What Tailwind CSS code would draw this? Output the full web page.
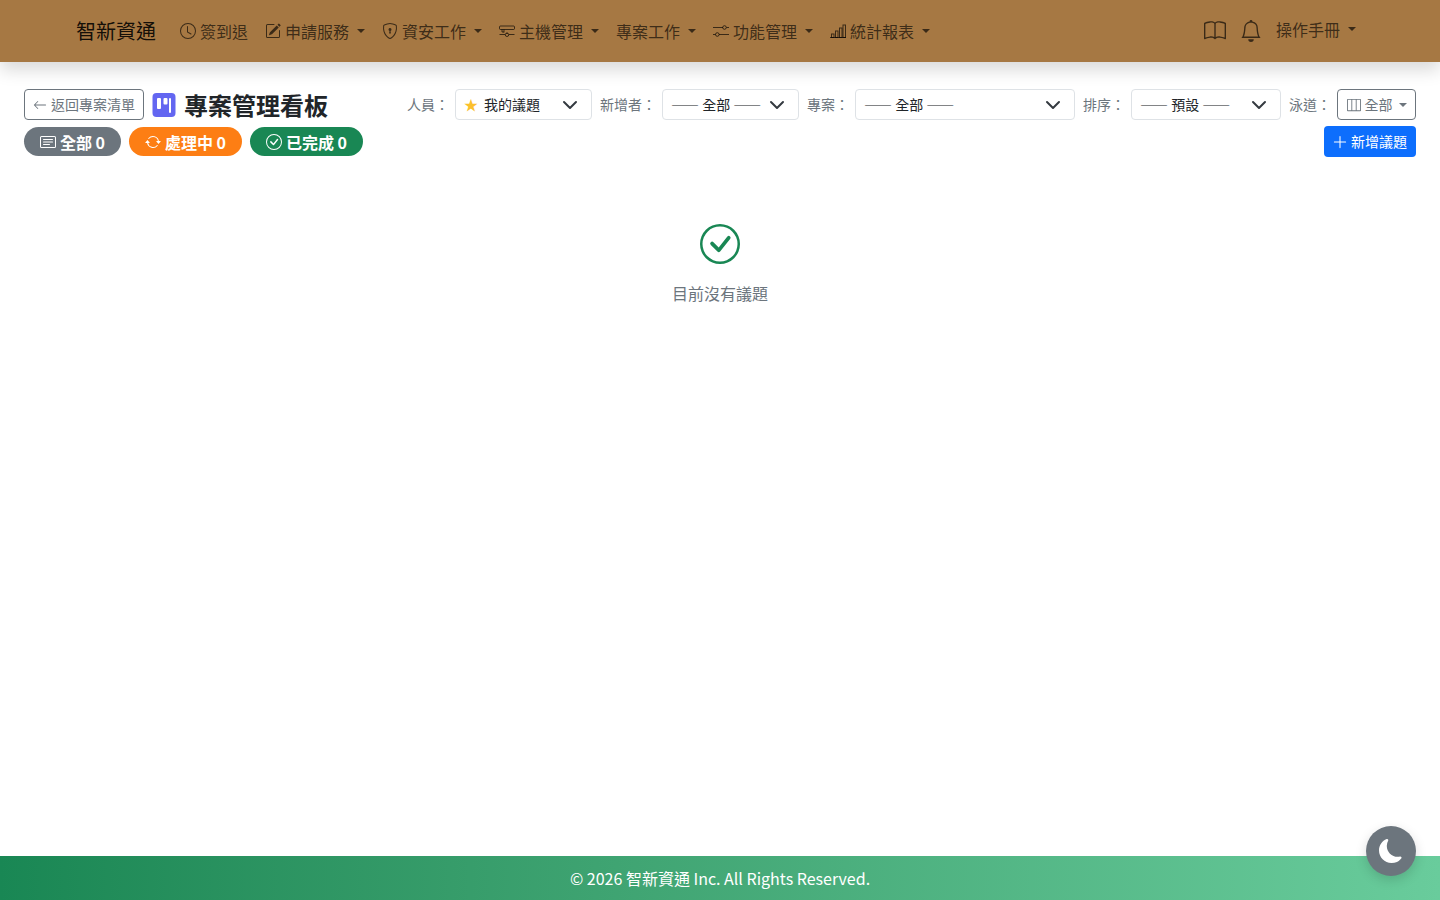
<!DOCTYPE html>
<html lang="zh-Hant">
<head>
  <meta charset="UTF-8">
  <meta name="viewport" content="width=device-width, initial-scale=1.0">
  <title>專案管理看板</title>
  <script src="https://cdn.jsdelivr.net/npm/@tailwindcss/browser@4"></script>
</head>
<body class="bg-white h-[900px] overflow-hidden flex flex-col font-['Noto_Sans_CJK_TC','Noto_Sans',sans-serif] text-[#212529]">

  <!-- navbar -->
  <nav class="h-[62px] shrink-0 bg-[#a67843] shadow-[0_8px_16px_rgba(0,0,0,0.15)] flex items-center pl-[76px] pr-[84px] text-[16px] text-black/65">
    <span class="text-[20px] leading-[30px] text-black/90 mr-4">智新資通</span>
    <div class="flex items-center gap-[1px] h-6 leading-6">
      <a class="flex items-center gap-1 px-2">
        <svg class="w-4 h-4" viewBox="0 0 16 16" fill="currentColor"><path d="M8 3.5a.5.5 0 0 0-1 0V9a.5.5 0 0 0 .252.434l3.5 2a.5.5 0 0 0 .496-.868L8 8.71V3.5z"/><path d="M8 16A8 8 0 1 0 8 0a8 8 0 0 0 0 16zm7-8A7 7 0 1 1 1 8a7 7 0 0 1 14 0z"/></svg>
        簽到退
      </a>
      <a class="flex items-center gap-1 px-2">
        <svg class="w-4 h-4" viewBox="0 0 16 16" fill="currentColor"><path d="M15.502 1.94a.5.5 0 0 1 0 .706L14.459 3.69l-2-2L13.502.646a.5.5 0 0 1 .707 0l1.293 1.293zm-1.75 2.456-2-2L4.939 9.21a.5.5 0 0 0-.121.196l-.805 2.414a.25.25 0 0 0 .316.316l2.414-.805a.5.5 0 0 0 .196-.12l6.813-6.814z"/><path fill-rule="evenodd" d="M1 13.5A1.5 1.5 0 0 0 2.5 15h11a1.5 1.5 0 0 0 1.5-1.5v-6a.5.5 0 0 0-1 0v6a.5.5 0 0 1-.5.5h-11a.5.5 0 0 1-.5-.5v-11a.5.5 0 0 1 .5-.5H9a.5.5 0 0 0 0-1H2.5A1.5 1.5 0 0 0 1 2.5v11z"/></svg>
        申請服務
        <span class="ml-[4px] border-x-[4.8px] border-x-transparent border-t-[4.8px] border-t-current"></span>
      </a>
      <a class="flex items-center gap-1 px-2">
        <svg class="w-4 h-4" viewBox="0 0 16 16" fill="currentColor"><path d="M5.338 1.59a61.44 61.44 0 0 0-2.837.856.481.481 0 0 0-.328.39c-.554 4.157.726 7.19 2.253 9.188a10.725 10.725 0 0 0 2.287 2.233c.346.244.652.42.893.533.12.057.218.095.293.118a.55.55 0 0 0 .101.025.615.615 0 0 0 .1-.025c.076-.023.174-.061.294-.118.24-.113.547-.29.893-.533a10.726 10.726 0 0 0 2.287-2.233c1.527-1.997 2.807-5.031 2.253-9.188a.48.48 0 0 0-.328-.39c-.651-.213-1.75-.56-2.837-.855C9.552 1.29 8.531 1.067 8 1.067c-.53 0-1.552.223-2.662.524zM5.072.56C6.157.265 7.31 0 8 0s1.843.265 2.928.56c1.11.3 2.229.655 2.887.87a1.54 1.54 0 0 1 1.044 1.262c.596 4.477-.787 7.795-2.465 9.99a11.775 11.775 0 0 1-2.517 2.453 7.159 7.159 0 0 1-1.048.625c-.28.132-.581.24-.829.24s-.548-.108-.829-.24a7.158 7.158 0 0 1-1.048-.625 11.777 11.777 0 0 1-2.517-2.453C1.928 10.487.545 7.169 1.141 2.692A1.54 1.54 0 0 1 2.185 1.43 62.456 62.456 0 0 1 5.072.56z"/><path d="M9.5 6.5a1.5 1.5 0 0 1-1 1.415l.385 1.99a.5.5 0 0 1-.491.595h-.788a.5.5 0 0 1-.49-.595l.384-1.99a1.5 1.5 0 1 1 2-1.415z"/></svg>
        資安工作
        <span class="ml-[4px] border-x-[4.8px] border-x-transparent border-t-[4.8px] border-t-current"></span>
      </a>
      <a class="flex items-center gap-1 px-2">
        <svg class="w-4 h-4" viewBox="0 0 16 16" fill="none" stroke="currentColor"><rect x="0.5" y="3" width="15" height="3.5" rx="1"/><path d="M5 6.5v3M8 9.5v1.5M0.5 11.5h5.5M10 11.5h5.5M3 6.5v2.5h2"/><circle cx="8" cy="11.8" r="1.7"/></svg>
        主機管理
        <span class="ml-[4px] border-x-[4.8px] border-x-transparent border-t-[4.8px] border-t-current"></span>
      </a>
      <a class="flex items-center px-2">
        專案工作
        <span class="ml-[8px] border-x-[4.8px] border-x-transparent border-t-[4.8px] border-t-current"></span>
      </a>
      <a class="flex items-center gap-1 px-2">
        <svg class="w-4 h-4" viewBox="0 0 16 16" fill="none" stroke="currentColor"><path d="M0 4.5h10M13.5 4.5H16M0 11.5h2.500M6 11.5h10"/><circle cx="11.500" cy="4.500" r="1.800"/><circle cx="4.300" cy="11.500" r="1.800"/><path d="M0 8h4" stroke-opacity="0"/></svg>
        功能管理
        <span class="ml-[4px] border-x-[4.8px] border-x-transparent border-t-[4.8px] border-t-current"></span>
      </a>
      <a class="flex items-center gap-1 px-2">
        <svg class="w-4 h-4" viewBox="0 0 16 16" fill="none" stroke="currentColor"><path d="M0 14.500h16"/><rect x="1.500" y="11" width="2.500" height="3.500"/><rect x="5.500" y="8" width="2.500" height="6.500"/><rect x="9.500" y="5" width="2.500" height="9.500"/><rect x="13" y="2" width="2.500" height="12.500"/></svg>
        統計報表
        <span class="ml-[4px] border-x-[4.8px] border-x-transparent border-t-[4.8px] border-t-current"></span>
      </a>
    </div>
    <div class="ml-auto flex items-center">
      <svg class="w-[22px] h-[22px] mr-[14px]" viewBox="0 0 16 16" fill="currentColor"><path d="M1 2.828c.885-.37 2.154-.769 3.388-.893 1.33-.134 2.458.063 3.112.752v9.746c-.935-.53-2.12-.603-3.213-.493-1.18.12-2.37.461-3.287.811V2.828zm7.500-.141c.654-.689 1.782-.886 3.112-.752 1.234.124 2.503.523 3.388.893v9.923c-.918-.35-2.107-.692-3.287-.81-1.094-.111-2.278-.039-3.213.492V2.687zM8 1.783C7.015.936 5.587.81 4.287.94c-1.514.153-3.042.672-3.994 1.105A.5.5 0 0 0 0 2.500v11a.5.5 0 0 0 .707.455c.882-.4 2.303-.881 3.680-1.020 1.409-.142 2.590.087 3.223.877a.5.5 0 0 0 .780 0c.633-.790 1.814-1.019 3.222-.877 1.378.139 2.800.62 3.681 1.020A.5.5 0 0 0 16 13.500v-11a.5.5 0 0 0-.293-.455c-.952-.433-2.480-.952-3.994-1.105C10.413.809 8.985.936 8 1.783z"/></svg>
      <svg class="w-[22px] h-[22px] mr-[14px]" viewBox="0 0 16 16" fill="currentColor"><path d="M8 16a2 2 0 0 0 2-2H6a2 2 0 0 0 2 2zM8 1.918l-.797.161A4.002 4.002 0 0 0 4 6c0 .628-.134 2.197-.459 3.742-.160.767-.376 1.566-.663 2.258h10.244c-.287-.692-.502-1.490-.663-2.258C12.134 8.197 12 6.628 12 6a4.002 4.002 0 0 0-3.203-3.920L8 1.917zM14.220 12c.223.447.481.801.780 1H1c.299-.199.557-.553.780-1C2.680 10.200 3 6.880 3 6c0-2.420 1.720-4.440 4.005-4.901a1 1 0 1 1 1.990 0A5.002 5.002 0 0 1 13 6c0 .880.320 4.200 1.220 6z"/></svg>
      <a class="flex items-center -mt-[5px] leading-6">
        操作手冊
        <span class="ml-[8px] border-x-[4.8px] border-x-transparent border-t-[4.8px] border-t-current"></span>
      </a>
    </div>
  </nav>

  <!-- toolbar -->
  <main class="flex-1 px-6 pt-[27px]">
    <div class="flex items-center justify-between h-[31px]">
      <div class="flex items-center">
        <a class="h-[31px] w-[120px] border border-[#6c757d] rounded-[4px] text-[14px] text-[#6c757d] flex items-center justify-center gap-1">
          <svg class="w-[14px] h-[14px]" viewBox="0 0 16 16" fill="currentColor"><path fill-rule="evenodd" d="M15 8a.5.5 0 0 0-.5-.5H2.707l3.147-3.146a.5.5 0 1 0-.708-.708l-4 4a.5.5 0 0 0 0 .708l4 4a.5.5 0 0 0 .708-.708L2.707 8.500H14.500A.5.5 0 0 0 15 8z"/></svg>
          返回專案清單
        </a>
        <svg class="w-[24px] h-[24px] ml-[8px]" viewBox="0 0 24 24"><rect width="23" height="24" x="0.500" rx="4" fill="#6366f1"/><rect x="5" y="5" width="4" height="11" rx="1" fill="#fff"/><rect x="11.500" y="5" width="4" height="6.500" rx="1" fill="#fff"/><rect x="17" y="5" width="2" height="15" rx="1" fill="#fff"/></svg>
        <h1 class="ml-[8px] text-[24px] leading-[31px] font-bold">專案管理看板</h1>
      </div>
      <div class="flex items-center text-[14px] leading-[21px]">
        <label class="text-[#6c757d] mr-[6px]">人員：</label>
        <div class="w-[137px] h-[31px] border border-[#dee2e6] rounded-[4px] flex items-center justify-between pl-2 pr-[13px] text-[#212529]">
          <span class="flex items-center"><span class="w-[18px] text-[#fbc02d]">★</span><span class="ml-[2px]">我的議題</span></span>
          <svg class="w-4 h-4 text-[#343a40]" viewBox="0 0 16 16" fill="none" stroke="currentColor" stroke-width="2" stroke-linecap="round" stroke-linejoin="round"><path d="m2 5 6 6 6-6"/></svg>
        </div>
        <label class="text-[#6c757d] ml-2 mr-[6px]">新增者：</label>
        <div class="w-[137px] h-[31px] border border-[#dee2e6] rounded-[4px] flex items-center justify-between pl-2 pr-[13px]">
          <span>—— 全部 ——</span>
          <svg class="w-4 h-4 text-[#343a40]" viewBox="0 0 16 16" fill="none" stroke="currentColor" stroke-width="2" stroke-linecap="round" stroke-linejoin="round"><path d="m2 5 6 6 6-6"/></svg>
        </div>
        <label class="text-[#6c757d] ml-2 mr-[6px]">專案：</label>
        <div class="w-[220px] h-[31px] border border-[#dee2e6] rounded-[4px] flex items-center justify-between pl-2 pr-[13px]">
          <span>—— 全部 ——</span>
          <svg class="w-4 h-4 text-[#343a40]" viewBox="0 0 16 16" fill="none" stroke="currentColor" stroke-width="2" stroke-linecap="round" stroke-linejoin="round"><path d="m2 5 6 6 6-6"/></svg>
        </div>
        <label class="text-[#6c757d] ml-2 mr-[6px]">排序：</label>
        <div class="w-[150px] h-[31px] border border-[#dee2e6] rounded-[4px] flex items-center justify-between pl-2 pr-[13px]">
          <span>—— 預設 ——</span>
          <svg class="w-4 h-4 text-[#343a40]" viewBox="0 0 16 16" fill="none" stroke="currentColor" stroke-width="2" stroke-linecap="round" stroke-linejoin="round"><path d="m2 5 6 6 6-6"/></svg>
        </div>
        <label class="text-[#6c757d] ml-2 mr-[6px]">泳道：</label>
        <a class="w-[79px] h-[31px] border border-[#6c757d] rounded-[4px] flex items-center justify-center gap-1 text-[#6c757d]">
          <svg class="w-[14px] h-[14px]" viewBox="0 0 16 16" fill="currentColor"><path d="M0 2a1 1 0 0 1 1-1h14a1 1 0 0 1 1 1v12a1 1 0 0 1-1 1H1a1 1 0 0 1-1-1V2zm1 0v12h4V2H1zm5 0v12h4V2H6zm5 0v12h4V2h-4z"/></svg>
          全部
          <span class="ml-[2px] border-x-[4.2px] border-x-transparent border-t-[4.2px] border-t-current"></span>
        </a>
      </div>
    </div>

    <div class="flex items-center justify-between mt-[6px] h-[31px]">
      <div class="flex items-center gap-2 text-[16px] font-bold text-white">
        <a class="h-[29px] w-[97px] rounded-full bg-[#6c757d] flex items-center justify-center gap-1">
          <svg class="w-4 h-4" viewBox="0 0 16 16" fill="currentColor"><path d="M14.500 3a.5.5 0 0 1 .5.5v9a.5.5 0 0 1-.5.5h-13a.5.5 0 0 1-.5-.5v-9a.5.5 0 0 1 .5-.5h13zm-13-1A1.500 1.500 0 0 0 0 3.500v9A1.500 1.500 0 0 0 1.500 14h13a1.500 1.500 0 0 0 1.500-1.500v-9A1.500 1.500 0 0 0 14.500 2h-13z"/><path d="M3 5.500a.5.5 0 0 1 .5-.5h9a.5.5 0 0 1 0 1h-9a.5.5 0 0 1-.5-.5zM3 8a.5.5 0 0 1 .5-.5h9a.5.5 0 0 1 0 1h-9A.5.5 0 0 1 3 8zm0 2.500a.5.5 0 0 1 .5-.5h6a.5.5 0 0 1 0 1h-6a.5.5 0 0 1-.5-.5z"/></svg>
          全部 0
        </a>
        <a class="h-[29px] w-[113px] rounded-full bg-[#fd7e14] flex items-center justify-center gap-1">
          <svg class="w-4 h-4" viewBox="0 0 16 16" fill="currentColor"><path d="M11.534 7h3.932a.25.25 0 0 1 .192.410l-1.966 2.360a.25.25 0 0 1-.384 0l-1.966-2.360a.25.25 0 0 1 .192-.41zm-11 2h3.932a.25.25 0 0 0 .192-.410L2.692 6.230a.25.25 0 0 0-.384 0L.342 8.590A.25.25 0 0 0 .534 9z"/><path fill-rule="evenodd" d="M8 3c-1.552 0-2.940.707-3.857 1.818a.5.5 0 1 1-.771-.636A6.002 6.002 0 0 1 13.917 7H12.900A5.002 5.002 0 0 0 8 3zM3.100 9a5.002 5.002 0 0 0 8.757 2.182.5.5 0 1 1 .771.636A6.002 6.002 0 0 1 2.083 9H3.100z"/></svg>
          處理中 0
        </a>
        <a class="h-[29px] w-[113px] rounded-full bg-[#198754] flex items-center justify-center gap-1">
          <svg class="w-4 h-4" viewBox="0 0 16 16" fill="currentColor"><path d="M8 15A7 7 0 1 1 8 1a7 7 0 0 1 0 14zm0 1A8 8 0 1 0 8 0a8 8 0 0 0 0 16z"/><path d="M10.970 4.970a.235.235 0 0 0-.02.022L7.477 9.417 5.384 7.323a.75.75 0 0 0-1.060 1.060L6.970 11.030a.75.75 0 0 0 1.079-.020l3.992-4.990a.75.75 0 0 0-1.071-1.050z"/></svg>
          已完成 0
        </a>
      </div>
      <a class="h-[31px] w-[92px] rounded-[4px] bg-[#0d6efd] text-white text-[14px] flex items-center justify-center gap-1">
        <svg class="w-[14px] h-[14px]" viewBox="0 0 16 16" fill="currentColor"><path d="M8 1a.6.6 0 0 1 .6.6v5.800h5.800a.6.6 0 0 1 0 1.200H8.600v5.800a.6.6 0 0 1-1.200 0V8.600H1.600a.6.6 0 0 1 0-1.200h5.800V1.600A.6.6 0 0 1 8 1z"/></svg>
        新增議題
      </a>
    </div>

    <!-- empty state -->
    <div class="flex flex-col items-center mt-[67px] text-[#6c757d]">
      <svg class="w-10 h-10 text-[#198754]" viewBox="0 0 16 16" fill="currentColor"><path d="M8 15A7 7 0 1 1 8 1a7 7 0 0 1 0 14zm0 1A8 8 0 1 0 8 0a8 8 0 0 0 0 16z"/><path d="M10.970 4.970a.75.75 0 0 1 1.070 1.050l-3.990 4.990a.75.75 0 0 1-1.080.020L4.324 8.384a.75.75 0 1 1 1.060-1.060l2.094 2.093 3.473-4.425a.24.24 0 0 1 .020-.022z"/></svg>
      <p class="mt-[17px] text-[16px] leading-6">目前沒有議題</p>
    </div>
  </main>

  <footer class="h-[44px] shrink-0 bg-gradient-to-r from-[#198754] to-[#69cc9c] text-white text-[16px] flex items-center justify-center">
    © 2026 智新資通 Inc. All Rights Reserved.
  </footer>

  <!-- theme toggle -->
  <button class="fixed right-6 bottom-6 w-[50px] h-[50px] rounded-full bg-[#6c757d] shadow-[0_4px_12px_rgba(0,0,0,0.15)] flex items-center justify-center text-white">
    <svg class="w-6 h-6" viewBox="0 0 16 16" fill="currentColor"><path d="M6 .278a.768.768 0 0 1 .08.858 7.208 7.208 0 0 0-.878 3.460c0 4.021 3.278 7.277 7.318 7.277.527 0 1.040-.055 1.533-.160a.787.787 0 0 1 .810.316.733.733 0 0 1-.031.893A8.349 8.349 0 0 1 8.344 16C3.734 16 0 12.286 0 7.710 0 4.266 2.114 1.312 5.124.060A.752.752 0 0 1 6 .278z"/></svg>
  </button>
</body>
</html>
